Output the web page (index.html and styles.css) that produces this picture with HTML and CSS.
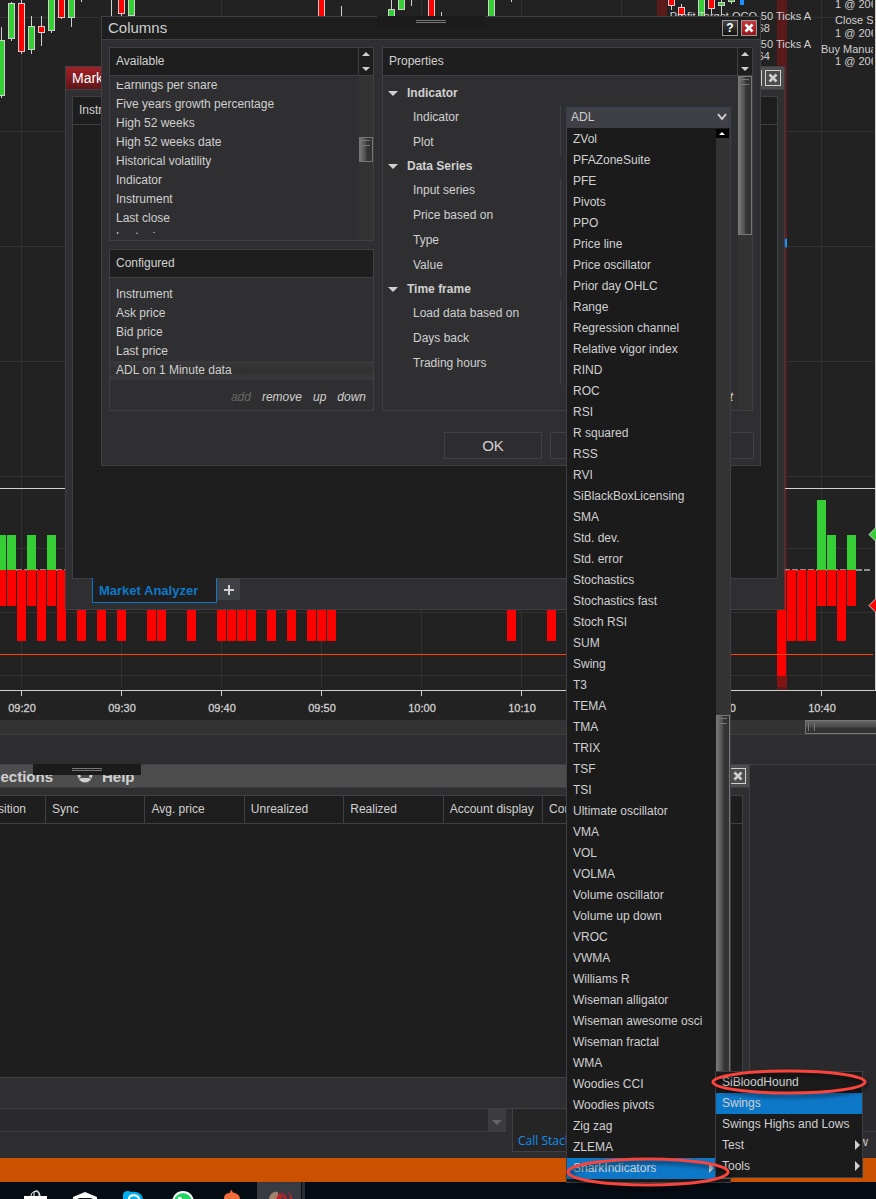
FILE: index.html
```html
<!DOCTYPE html>
<html lang="en">
<head>
<meta charset="utf-8">
<title>Market Analyzer - Columns</title>
<link rel="stylesheet" href="styles.css">
</head>
<body>
<div class="desktop">
  <svg class="chart" role="img" aria-label="Price chart">
    <g class="band"><rect x="657" y="0" width="10" height="690"/><rect x="777" y="0" width="10" height="690"/></g>
    <path class="grid" d="M21.500 0V687M121.500 0V687M221.500 0V687M321.500 0V687M421.500 0V687M521.500 0V687M621.500 0V687M721.500 0V687M821.500 0V687M0 17.500H874M0 131.500H874M0 246.500H874M0 361.500H874M0 476.500H874M0 548.500H874M0 612.500H874M0 675.500H874"/>
    <path class="wick" d="M1.500 27V98M11.500 2V41M21.500 0V54M31.500 16V54M41.500 16V46M51.500 0V33M61.500 0V19M71.500 0V27M81.500 0V2M111.500 0V16M121.500 0V16M341.500 6V16M391.500 0V10M411.500 0V6M441.500 12V16M511.500 0V2M671.500 0V10M681.500 4V16M711.500 0V14M721.500 0V15M731.500 0V4"/>
    <g class="up">
      <rect x="-2.500" y="40.500" width="7" height="55"/><rect x="8.500" y="3.500" width="6" height="35"/><rect x="28.500" y="26.500" width="6" height="23"/><rect x="48.500" y="-5.500" width="6" height="36"/><rect x="68.500" y="-5.500" width="6" height="23"/><rect x="128.500" y="-5.500" width="6" height="21"/><rect x="388.500" y="9.500" width="6" height="9"/><rect x="398.500" y="-5.500" width="6" height="15"/><rect x="488.500" y="-5.500" width="6" height="25"/><rect x="698.500" y="-5.500" width="6" height="25"/><rect x="718.500" y="2.500" width="6" height="3"/><rect x="728.500" y="-5.500" width="6" height="7"/>
    </g>
    <g class="down">
      <rect x="18.500" y="3.500" width="6" height="48"/><rect x="38.500" y="26.500" width="6" height="6"/><rect x="58.500" y="-5.500" width="6" height="23"/><rect x="118.500" y="-5.500" width="6" height="19"/><rect x="318.500" y="-5.500" width="6" height="25"/><rect x="428.500" y="-5.500" width="6" height="25"/><rect x="668.500" y="-5.500" width="6" height="11"/><rect x="678.500" y="7.500" width="6" height="7"/><rect x="708.500" y="-5.500" width="6" height="14"/>
    </g>
    <path class="entry" d="M740 0h4v5h-4zM787 238l-3 2v6l3 2z"/>
    <path class="zero" d="M0 570H872"/>
    <path class="gain" d="M0 535h6v35H0zM7 535h9v35H7zM27 535h9v35h-9zM47 535h9v35h-9zM817 500h9v70h-9zM827 535h9v35h-9zM847 535h9v35h-9z"/>
    <path class="loss" d="M0 570h6v36H0zM7 570h9v36H7zM17 570h9v71h-9zM27 570h9v36h-9zM37 570h9v71h-9zM47 570h9v36h-9zM57 570h9v71h-9zM77 570h9v71h-9zM97 570h9v71h-9zM117 570h9v71h-9zM147 570h9v71h-9zM157 570h9v71h-9zM187 570h9v71h-9zM217 570h9v71h-9zM227 570h9v71h-9zM237 570h9v71h-9zM247 570h9v71h-9zM267 570h9v71h-9zM287 570h9v71h-9zM307 570h9v71h-9zM317 570h9v71h-9zM327 570h9v71h-9zM507 570h9v71h-9zM547 570h9v71h-9zM777 570h9v106h-9zM787 570h9v71h-9zM797 570h9v71h-9zM807 570h9v71h-9zM817 570h9v36h-9zM827 570h9v36h-9zM837 570h9v71h-9zM847 570h9v36h-9z"/>
    <rect class="fade" x="777" y="676" width="10" height="11"/>
    <path class="stop" d="M0 654.500H873"/>
    <path class="axis" d="M0 488.500H875M0 690.500H875M875.500 0V691M21.500 690V696M121.500 690V696M221.500 690V696M321.500 690V696M421.500 690V696M521.500 690V696M621.500 690V696M721.500 690V696M821.500 690V696"/>
    <path class="marker up" d="M869 534.500l9 -9v18z"/><path class="marker down" d="M869 605.500l9 -9v18z"/>
    <g class="times">
      <text x="22" y="712">09:20</text><text x="122" y="712">09:30</text><text x="222" y="712">09:40</text><text x="322" y="712">09:50</text><text x="422" y="712">10:00</text><text x="522" y="712">10:10</text><text x="622" y="712">10:20</text><text x="722" y="712">10:30</text><text x="822" y="712">10:40</text>
    </g>
    <g class="orders">
      <text x="757" y="20">Profit Target OCO</text><text x="811" y="20">, 50 Ticks A</text><text x="770" y="32">1 @ 20668</text><text x="811" y="48">, 50 Ticks A</text><text x="770" y="60">1 @ 20664</text>
    </g>
    <svg width="873" height="80" class="clip"><g class="quotes">
      <text x="835" y="8">1 @ 2065</text><text x="835" y="24">Close SIM</text><text x="835" y="37">1 @ 2065</text><text x="821" y="53">Buy Manual</text><text x="835" y="65">1 @ 2065</text>
    </g></svg>
  </svg>
  <div class="chart-scroll"><div class="chart-thumb"></div></div>
  <div class="chart-foot"></div>

  <main class="workspace">
    <section class="control">
      <header class="control-title">
        <span class="conn">Connections</span>
        <svg class="help-icon" viewBox="0 0 18 16" width="18" height="16" aria-hidden="true"><circle cx="9" cy="7" r="6" fill="none" stroke="#d0d0d0" stroke-width="3"/><path d="M2 11l4-2M16 11l-4-2" stroke="#4d4d4d"/><path d="M6 11h6" stroke="#d0d0d0" stroke-width="2"/></svg>
        <span>Help</span>
        <button class="win-btn" aria-label="Close control center"><svg viewBox="0 0 16 16"><path d="M4 4l8 8M12 4l-8 8"/></svg></button>
      </header>
      <div class="grip control-grip"><i></i></div>
      <div class="positions">
        <table>
          <tr><th class="first">Position</th><th>Sync</th><th>Avg. price</th><th>Unrealized</th><th>Realized</th><th>Account display</th><th>Connection</th><th></th></tr>
        </table>
      </div>
    </section>
  </main>
  <div class="output">
    <div class="output-combo"><span></span></div>
    <div class="call-tab"><a href="#">Call Stack</a></div>
    <div class="output-rest"><span>w</span></div>
  </div>
  <div class="status"></div>
  <nav class="taskbar" aria-label="Taskbar">
    <svg width="320" height="17">
      <path d="M24 14h23v4H24z" fill="#fff"/><path d="M31 14c0-6 9-6 9 0M34 14v-3c0-3 5-3 5 0v3" fill="none" stroke="#fff"/>
      <path d="M73 17v-2l12-5 12 5v2zM77 16h16l-8 3z" fill="#fff" fill-rule="evenodd"/>
      <path d="M123 17v-4c0-4 5-5 8-3 7-1 11 2 12 7z" fill="#00aff0"/><path d="M129 17c0-5 9-5 10 0" fill="none" stroke="#fff" stroke-width="2"/>
      <circle cx="183" cy="20" r="11" fill="#fff"/><circle cx="183" cy="20" r="9" fill="#25d366"/><path d="M178 17q0-3 3-2l1 2z" fill="#fff"/>
      <path d="M224 17c0-5 3-6 6-6 0-2 1-3 2-3 0 2 1 3 3 3 3 1 5 3 5 6z" fill="#f26b3a"/>
      <path d="M257 0h44v17h-44z" fill="#383c42"/><path d="M302 0h3v17h-3z" fill="#2b2e33"/>
      <path d="M269 17c1-6 5-8 9-7v7z" fill="#a08068"/><path d="M276 17l3-6 4 3-2 3zM280 10c4 1 6 3 7 7h-3c0-3-2-5-4-7zM286 9c4 2 6 4 6 8h-2c0-4-1-6-4-8z" fill="#b9242b"/>
    </svg>
  </nav>

  <section class="analyzer" aria-label="Market Analyzer">
    <header class="analyzer-title"><span>Market Analyzer</span><div><button class="win-btn" aria-label="Maximize"></button><button class="win-btn" aria-label="Close analyzer"><svg viewBox="0 0 16 16"><path d="M4 4l8 8M12 4l-8 8"/></svg></button></div></header>
    <div class="analyzer-body"><div class="panel-head">Instrument</div></div>
    <div class="tabs"><button class="tab">Market Analyzer</button><button class="add-tab" aria-label="Add tab"><svg viewBox="0 0 12 12" width="12" height="12"><path d="M6 1V11M1 6H11"/></svg></button></div>
  </section>

  <section class="dialog" role="dialog" aria-label="Columns">
    <header class="dialog-title"><h1>Columns</h1><button class="help-btn">?</button><button class="close-btn" aria-label="Close"><svg viewBox="0 0 16 16"><path d="M4 4l8 8M12 4l-8 8"/></svg></button></header>
    <div class="grip dialog-grip"><i></i></div>
    <div class="dialog-body">
      <div class="left">
        <section class="box available">
          <header class="panel-head"><h2>Available</h2><span class="spin"></span></header>
          <div class="scroll-area">
            <ul class="items"><li>Earnings per share</li><li>Five years growth percentage</li><li>High 52 weeks</li><li>High 52 weeks date</li><li>Historical volatility</li><li>Indicator</li><li>Instrument</li><li>Last close</li><li>Last price</li></ul>
            <div class="track"><div class="thumb"></div></div>
          </div>
        </section>
        <section class="box configured">
          <header class="panel-head"><h2>Configured</h2></header>
          <ul class="items"><li>Instrument</li><li>Ask price</li><li>Bid price</li><li>Last price</li><li class="selected">ADL on 1 Minute data</li></ul>
          <footer><a class="off">add</a><a href="#">remove</a><a href="#">up</a><a href="#">down</a></footer>
        </section>
      </div>
      <section class="box properties">
        <header class="panel-head"><h2>Properties</h2><span class="spin"></span></header>
        <div class="scroll-area">
          <div class="props">
            <h3>Indicator</h3>
            <div class="row"><label for="indicator">Indicator</label><div class="value">
              <select id="indicator"><option>ADL</option></select>
              <svg class="chev" viewBox="0 0 10 8" width="10" height="8" aria-hidden="true"><path d="M1 1l4 5 4-5"/></svg>
              <div class="menu">
                <ul class="menu-list">
                  <li>ZVol</li><li>PFAZoneSuite</li><li>PFE</li><li>Pivots</li><li>PPO</li><li>Price line</li><li>Price oscillator</li><li>Prior day OHLC</li><li>Range</li><li>Regression channel</li><li>Relative vigor index</li><li>RIND</li><li>ROC</li><li>RSI</li><li>R squared</li><li>RSS</li><li>RVI</li><li>SiBlackBoxLicensing</li><li>SMA</li><li>Std. dev.</li><li>Std. error</li><li>Stochastics</li><li>Stochastics fast</li><li>Stoch RSI</li><li>SUM</li><li>Swing</li><li>T3</li><li>TEMA</li><li>TMA</li><li>TRIX</li><li>TSF</li><li>TSI</li><li>Ultimate oscillator</li><li>VMA</li><li>VOL</li><li>VOLMA</li><li>Volume oscillator</li><li>Volume up down</li><li>VROC</li><li>VWMA</li><li>Williams R</li><li>Wiseman alligator</li><li>Wiseman awesome osci</li><li>Wiseman fractal</li><li>WMA</li><li>Woodies CCI</li><li>Woodies pivots</li><li>Zig zag</li><li>ZLEMA</li>
                  <li class="active sub">SharkIndicators
                    <ul class="submenu"><li>SiBloodHound</li><li class="active">Swings</li><li>Swings Highs and Lows</li><li class="sub">Test</li><li class="sub">Tools</li></ul>
                  </li>
                </ul>
                <div class="menu-track"><span class="menu-up"></span><div class="thumb"></div></div>
              </div>
            </div></div>
            <div class="row"><span class="name">Plot</span><div class="value"></div></div>
            <h3>Data Series</h3>
            <div class="row"><span class="name">Input series</span><div class="value"></div></div>
            <div class="row"><span class="name">Price based on</span><div class="value"></div></div>
            <div class="row"><span class="name">Type</span><div class="value"></div></div>
            <div class="row"><span class="name">Value</span><div class="value"></div></div>
            <h3>Time frame</h3>
            <div class="row"><span class="name">Load data based on</span><div class="value"></div></div>
            <div class="row"><span class="name">Days back</span><div class="value"></div></div>
            <div class="row last"><span class="name">Trading hours</span><div class="value"></div></div>
            <footer><a href="#">preset</a></footer>
          </div>
          <div class="track"><div class="thumb"></div></div>
        </div>
      </section>
    </div>
    <div class="actions"><button>OK</button><button>Cancel</button><button>Apply</button></div>
  </section>

  <svg class="marks" aria-hidden="true"><ellipse cx="789" cy="1082" rx="76" ry="11"/><ellipse cx="648" cy="1172" rx="80" ry="13"/></svg>
</div>
</body>
</html>
```
FILE: styles.css
```css
* { box-sizing: border-box; }
body { margin: 0; background: #222; color: #d0d0d0; font: 12px/19px "Liberation Sans", Arial, sans-serif; }
ul { list-style: none; margin: 0; padding: 0; }
h1, h2, h3 { margin: 0; font-size: 12px; font-weight: normal; }
button, select { font: inherit; color: inherit; padding: 0; margin: 0; border-radius: 0; }
a { color: inherit; text-decoration: none; }
.desktop { position: relative; display: flex; flex-direction: column; min-height: 100vh; overflow: hidden; }

/* Chart */
.chart { display: block; flex: none; width: 100%; height: 720px; overflow: hidden; background: #222; }
.clip { overflow: hidden; }
.band { fill: #5a1a1a; }
.grid { stroke: #323234; fill: none; }
.wick, .axis { stroke: #d0d0d0; fill: none; }
.up { fill: #35ce35; stroke: #d0d0d0; }
.down { fill: #f00; stroke: #d0d0d0; }
.gain { fill: #35ce35; }
.loss { fill: #f00; }
.entry { fill: #1e90ff; }
.fade { fill: #821414; }
.stop { stroke: #ff4500; }
.zero { stroke: #909090; stroke-width: 2; stroke-dasharray: 6 2; }
.times { fill: #d0d0d0; font-size: 11px; text-anchor: middle; stroke: #d0d0d0; stroke-width: 0.3; }
.orders { fill: #d0d0d0; font-size: 11px; text-anchor: end; }
.quotes { fill: #d0d0d0; font-size: 11px; }
.chart-scroll { flex: none; display: flex; justify-content: flex-end; height: 15px; background: #333; border-bottom: 1px solid #3f3f46; }
.chart-thumb { width: 71px; border: 1px solid #777; border-right: 0; background: linear-gradient(#666, #484848 6px, #333 7px); }
.chart-thumb::before { content: ""; display: block; width: 5px; height: 8px; margin: 2px; border: solid #777; border-width: 0 1px; }
.chart-foot { flex: none; height: 29px; background: #2d2d30; }

/* Control center */
.workspace { flex: 1; display: flex; min-height: 344px; background: #2a2a2c; border-top: 1px solid #3f3f46; }
.control { position: relative; display: flex; flex-direction: column; width: 750px; background: #2f2f31; border-right: 1px solid #3f3f46; border-bottom: 1px solid #3f3f46; }
.control-title { display: flex; align-items: center; height: 23px; padding-right: 3px; background: #4d4d4d; border-bottom: 1px solid #3f3f46; font-size: 15px; font-weight: bold; white-space: nowrap; }
.conn { display: flex; justify-content: flex-end; width: 53px; overflow: hidden; }
.help-icon { margin: 0 8px 0 23px; }
.control-title .win-btn { margin-left: auto; }
.win-btn { width: 16px; height: 16px; border: 1px solid #d0d0d0; background: none; }
.win-btn svg, .close-btn svg { display: block; width: 14px; height: 14px; fill: none; stroke: #d0d0d0; stroke-width: 3; }
.grip { position: absolute; display: flex; justify-content: center; width: 108px; height: 11px; background: #1b1b1c; }
.grip i { width: 30px; height: 3px; margin-top: 4px; border: solid #777; border-width: 1px 0; }
.control-grip { left: 33px; top: -1px; }
.dialog-grip { left: 275px; top: -1px; }
.positions { flex: 1; margin: 7px 6px 30px 0; background: #1e1e1e; border: solid #3f3f46; border-width: 1px 1px 1px 0; overflow: hidden; }
table { width: 100%; border-spacing: 0; table-layout: fixed; }
th { height: 28px; padding: 0 0 0 6px; border-right: 1px solid #3f3f46; border-bottom: 1px solid #3f3f46; font-weight: normal; text-align: left; white-space: nowrap; }
th:last-child { border-right: 0; }
th.first { width: 46px; padding: 0 20px 0 0; direction: rtl; overflow: hidden; }

/* Output strip, status bar and taskbar */
.output { flex: none; display: flex; height: 49px; background: #2d2d30; }
.output-combo { display: flex; justify-content: flex-end; width: 506px; height: 23px; background: #2a2a2c; border-bottom: 1px solid #3f3f46; }
.output-combo span { width: 18px; background: #3c3c40; }
.output-combo span::after { content: ""; display: block; margin: 11px 4px; border: 5px solid transparent; border-top-color: #666; border-bottom: 0; }
.call-tab { width: 120px; height: 43px; margin-left: 6px; padding: 23px 0 0 5px; background: #252526; border: solid #3f3f46; border-width: 0 1px 1px; color: #1490ee; font-family: "Open Sans", sans-serif; line-height: 18px; }
.output-rest { flex: 1; text-align: right; padding: 24px 8px 0 0; background: linear-gradient(#2a2a2c 22px, #3f3f46 22px, #3f3f46 23px, #2d2d30 23px); }
.status { flex: none; height: 24px; background: #ca5100; }
.taskbar { flex: none; height: 17px; overflow: hidden; background: #060c14; }
.taskbar svg { display: block; }

/* Market Analyzer window */
.analyzer { position: absolute; left: 65px; top: 66px; display: flex; flex-direction: column; width: 720px; height: 544px; background: #2f2f31; border: 1px solid #3f3f46; }
.analyzer-title { display: flex; flex: none; height: 23px; background: #4d4d4d; border-bottom: 1px solid #3f3f46; color: #fff; font-size: 14px; line-height: 22px; }
.analyzer-title span { width: 400px; padding-left: 6px; background: linear-gradient(#a32024, #5e161b); }
.analyzer-title div { display: flex; gap: 3px; margin-left: auto; padding: 3px 3px 0 0; }
.analyzer-body { flex: 1; margin: 6px 6px 0; background: #1e1e1e; border: 1px solid #3f3f46; }
.panel-head { display: flex; align-items: center; height: 28px; padding-left: 6px; background: #1e1e1e; border-bottom: 1px solid #3f3f46; }
.tabs { display: flex; height: 30px; margin-left: 26px; }
.tab { width: 125px; height: 25px; margin-top: -1px; padding-left: 6px; border: solid #0e78c8; border-width: 0 1px 1px; background: #1e1e1e; color: #0e78c8; font-size: 13px; font-weight: bold; text-align: left; }
.add-tab { display: grid; place-items: center; width: 23px; height: 21px; border: 0; background: #3f3f46; }
.add-tab path { stroke: #d0d0d0; stroke-width: 2; }

/* Columns dialog */
.dialog { position: absolute; left: 101px; top: 16px; width: 660px; background: #2f2f31; border: 1px solid #3f3f46; }
.dialog-title { display: flex; align-items: center; gap: 3px; height: 23px; padding: 0 3px 0 6px; background: #1e1e1e; border-bottom: 1px solid #3f3f46; }
.dialog-title h1 { margin-right: auto; font-size: 15px; line-height: 22px; }
.help-btn, .close-btn { width: 16px; height: 16px; border: 1px solid #999; background: linear-gradient(#444, #111); color: #fff; font-weight: bold; line-height: 13px; }
.close-btn { background: linear-gradient(#c8383c, #981418); }
.close-btn svg { stroke: #fff; }
.dialog-body { display: flex; gap: 8px; padding: 7px; }
.left { display: flex; flex-direction: column; gap: 8px; width: 265px; }
.box { border: 1px solid #3f3f46; }
.properties { flex: 1; }
.spin { display: flex; flex-direction: column; justify-content: space-between; align-items: center; width: 15px; height: 27px; margin-left: auto; padding: 4px 0; border-left: 1px solid #3f3f46; }
.spin::before, .spin::after { content: ""; border: 4px solid transparent; }
.spin::before { border-bottom-color: #d0d0d0; border-top: 0; }
.spin::after { border-top-color: #d0d0d0; border-bottom: 0; }
.scroll-area { display: flex; }
.available .scroll-area { height: 164px; }
.available .items { flex: 1; height: 152px; margin-top: 6px; overflow: hidden; }
.available .items li:first-child { margin-top: -6px; }
.items li { height: 19px; padding-left: 6px; white-space: nowrap; }
.track { width: 14px; background: #333; }
.thumb { width: 14px; border: 1px solid #777; background: linear-gradient(90deg, #777, #484848 6px, #333 7px); }
.thumb::before { content: ""; display: block; width: 8px; height: 4px; margin: 2px auto; border: solid #777; border-width: 1px 0; }
.available .thumb { height: 25px; margin-top: 61px; }
.configured .items { padding-top: 7px; }
.selected { background: linear-gradient(#3a3a3d, #303030 50%, #3a3a3d); }
footer { display: flex; justify-content: flex-end; font-style: italic; }
.configured footer { gap: 11px; height: 30px; padding: 8px 7px 0; }
.off { color: #666; }
.properties .scroll-area { height: 334px; }
.properties .track .thumb { height: 159px; }
.props { flex: 1; padding-top: 6px; }
h3 { display: flex; align-items: center; gap: 9px; height: 23px; padding-left: 5px; font-weight: bold; }
h3::before { content: ""; border: 5px solid transparent; border-top-color: #d0d0d0; border-bottom: 0; }
.row { display: flex; height: 25px; }
.row label, .row .name { width: 177px; padding-left: 30px; line-height: 25px; }
.value { position: relative; flex: 1; padding: 2px 0 0 5px; border-left: 1px solid #3f3f46; }
.last { height: 34px; }
.props footer { padding: 3px 5px 0 0; }
select { display: block; width: 165px; height: 21px; padding-left: 5px; border: 0; outline: 1px solid #2b3040; background: #3f3f46; appearance: none; }
.chev { position: absolute; left: 156px; top: 8px; }
.chev path { fill: none; stroke: #d0d0d0; stroke-width: 2; }

/* Drop-down menu */
.menu { position: absolute; z-index: 2; left: 5px; top: 23px; display: flex; width: 165px; padding-bottom: 3px; border: 1px solid #3f3f46; border-top: 0; padding-top: 1px; background: #1b1b1c; }
.menu-list { width: 149px; }
.menu li { height: 21px; padding-left: 6px; line-height: 21px; white-space: nowrap; }
.menu li.active { background: #0e78c8; }
.sub { position: relative; }
.sub::after { content: ""; position: absolute; right: 2px; top: 5px; border: 5px solid transparent; border-left-color: #d0d0d0; border-right: 0; }
.submenu { position: absolute; z-index: 3; left: 148px; top: -87px; width: 148px; border: 1px solid #3f3f46; background: #1b1b1c; }
.menu-track { display: flex; flex-direction: column; flex: 1; background: #333; }
.menu-up { width: 13px; height: 9px; padding: 3px; background: #000; }
.menu-up::after { content: ""; display: block; width: 0; border: 3px solid transparent; border-bottom-color: #fff; border-top: 0; }
.menu-track .thumb { flex: none; height: 464px; margin-top: auto; }
.actions { display: flex; justify-content: flex-end; gap: 8px; padding: 14px 6px 6px; }
.actions button { width: 98px; height: 27px; border: 1px solid #3f3f46; background: #2d2d30; font-size: 15px; }
.marks { position: absolute; z-index: 5; inset: 0; width: 100%; height: 100%; pointer-events: none; }
.marks ellipse { fill: none; stroke: #f8443c; stroke-width: 3; filter: drop-shadow(2px 3px 2px #0008); }
```
